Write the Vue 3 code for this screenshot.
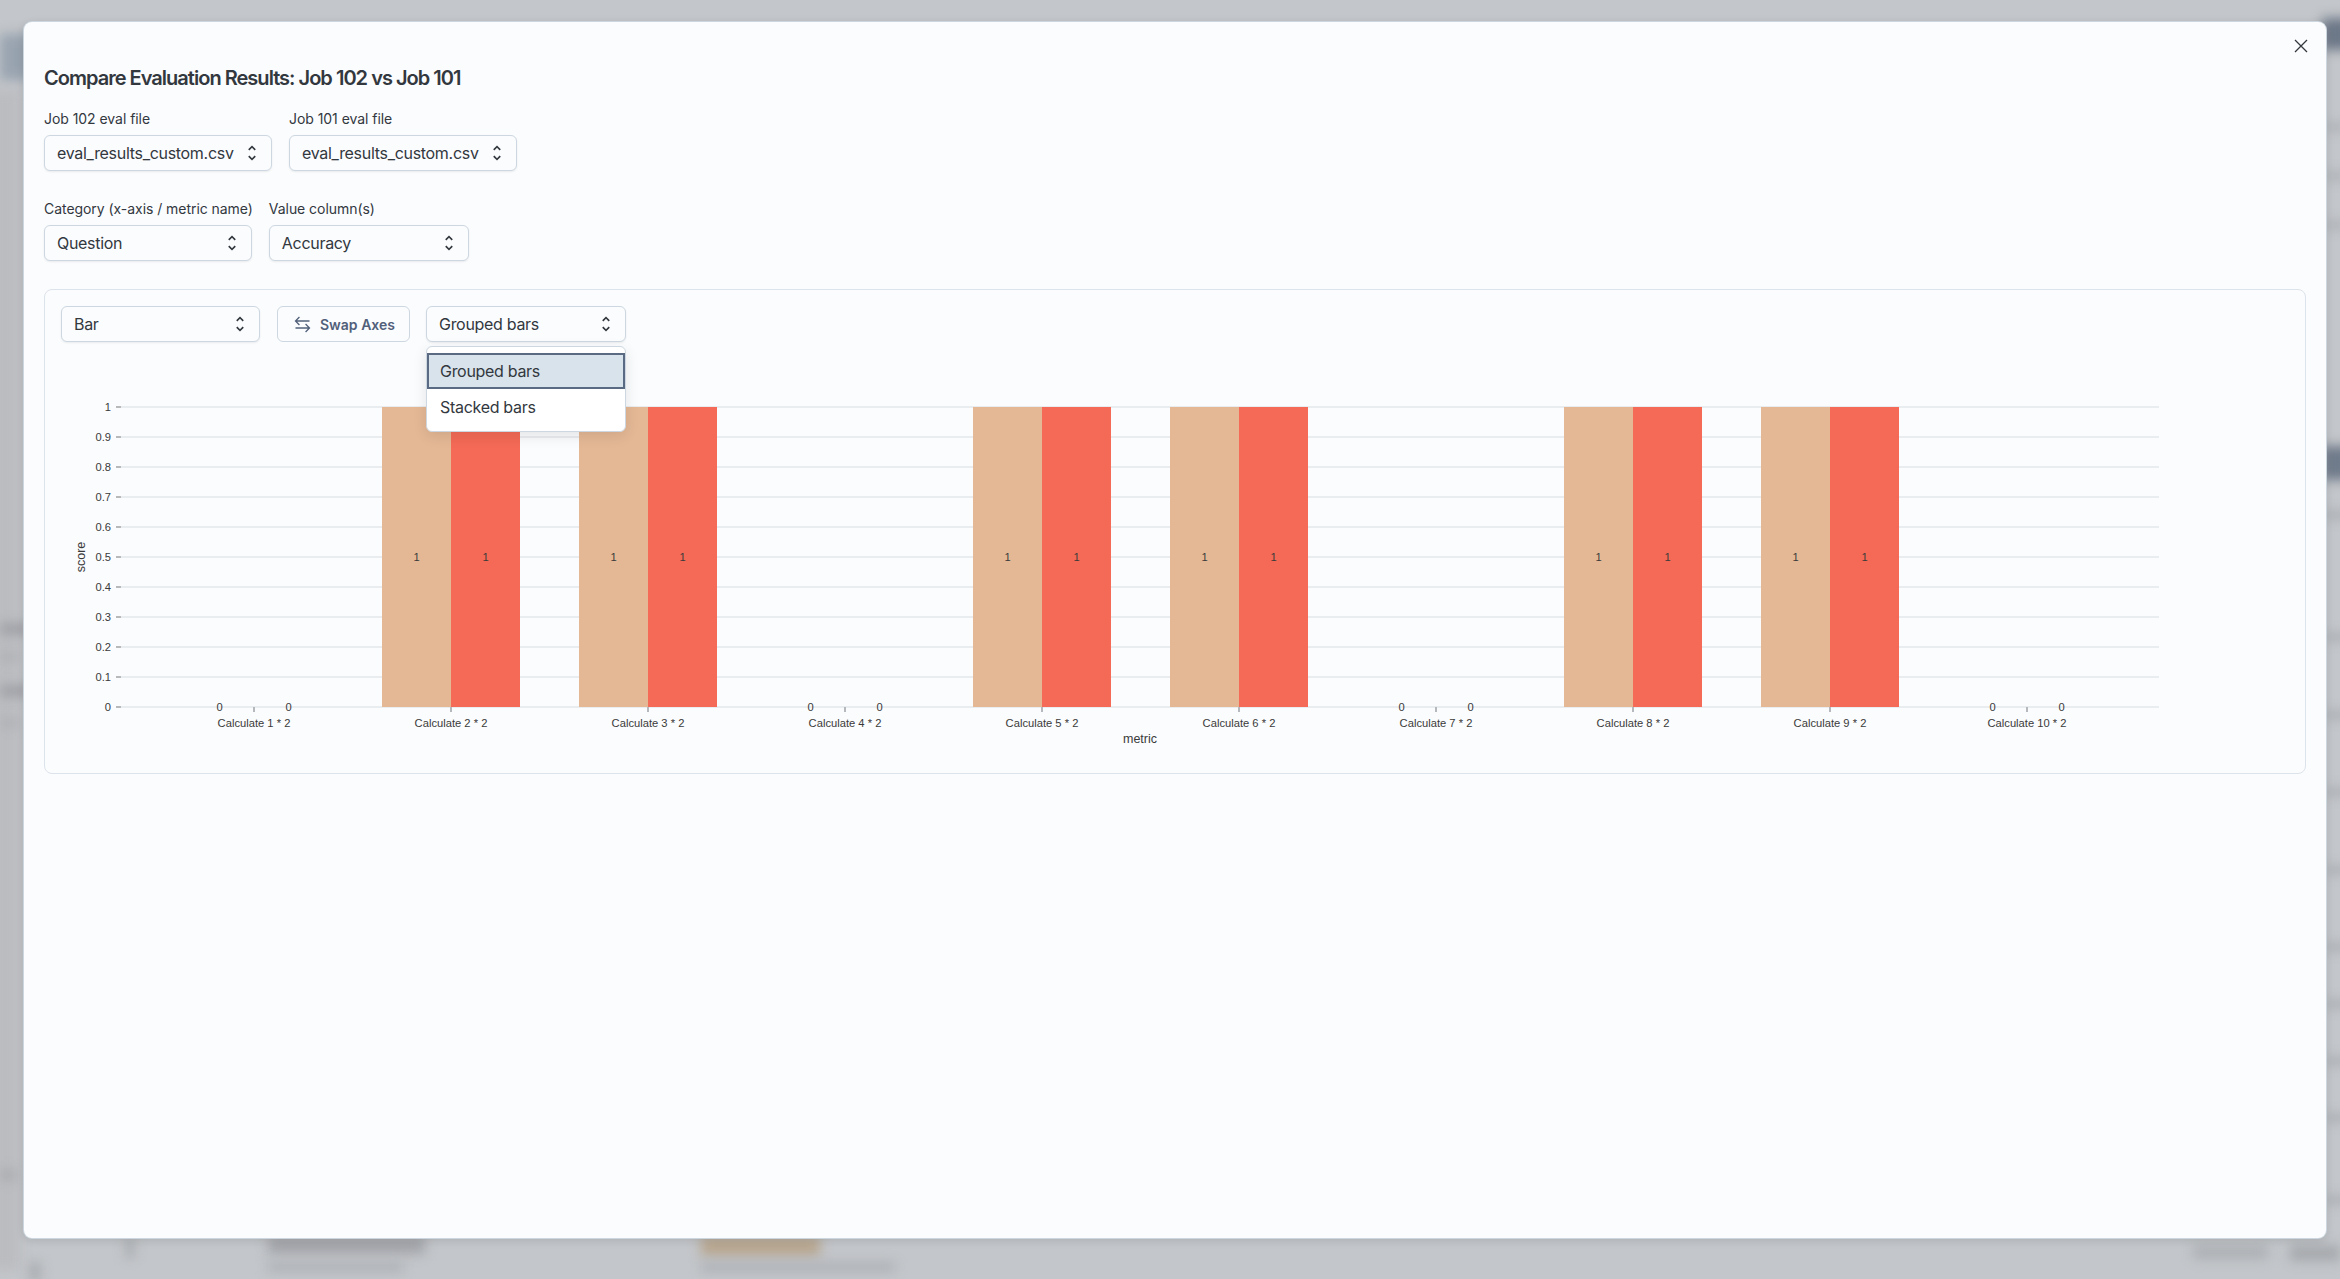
<script setup>
// blurred page behind the modal
const smudges = [
  { x: 0, y: 34, w: 46, h: 46, c: '#98a3b0' },
  { x: -10, y: 90, w: 30, h: 1180, c: '#bbbcc0' },
  { x: 0, y: 624, w: 30, h: 10, c: '#9a9ca1' },
  { x: 0, y: 654, w: 18, h: 6, c: '#a8aaae' },
  { x: 0, y: 686, w: 30, h: 10, c: '#9a9ca1' },
  { x: 0, y: 720, w: 18, h: 6, c: '#a8aaae' },
  { x: 0, y: 1170, w: 16, h: 10, c: '#a8aaae' },
  { x: 2322, y: 18, w: 30, h: 32, c: '#6c7787' },
  { x: 2326, y: 124, w: 20, h: 6, c: '#a4a7ac' },
  { x: 2326, y: 173, w: 20, h: 6, c: '#a4a7ac' },
  { x: 2326, y: 222, w: 20, h: 6, c: '#a4a7ac' },
  { x: 2322, y: 446, w: 30, h: 34, c: '#6f7a8a' },
  { x: 2326, y: 512, w: 20, h: 6, c: '#a0a3a8' },
  { x: 2326, y: 634, w: 20, h: 6, c: '#a0a3a8' },
  { x: 2326, y: 712, w: 20, h: 6, c: '#a0a3a8' },
  { x: 2326, y: 789, w: 20, h: 6, c: '#a0a3a8' },
  { x: 2326, y: 867, w: 20, h: 6, c: '#a0a3a8' },
  { x: 2326, y: 944, w: 20, h: 6, c: '#a0a3a8' },
  { x: 2326, y: 1001, w: 20, h: 6, c: '#a0a3a8' },
  { x: 2326, y: 1058, w: 20, h: 6, c: '#a0a3a8' },
  { x: 2326, y: 1115, w: 20, h: 6, c: '#a0a3a8' },
  { x: 2326, y: 1197, w: 20, h: 6, c: '#a0a3a8' },
  { x: 126, y: 1238, w: 8, h: 20, c: '#a6a9ad' },
  { x: 30, y: 1262, w: 10, h: 20, c: '#a6a9ad' },
  { x: 268, y: 1236, w: 157, h: 18, c: '#a2a4a9' },
  { x: 268, y: 1262, w: 135, h: 10, c: '#aeb1b6' },
  { x: 701, y: 1236, w: 119, h: 20, c: '#b8a68f' },
  { x: 701, y: 1262, w: 194, h: 10, c: '#aeb1b6' },
  { x: 2193, y: 1245, w: 75, h: 14, c: '#adb0b4' },
  { x: 2290, y: 1245, w: 50, h: 16, c: '#a6a9ad' }
]

const fileFields = [
  { label: 'Job 102 eval file', value: 'eval_results_custom.csv' },
  { label: 'Job 101 eval file', value: 'eval_results_custom.csv' }
]

const chevrons = 'M12 5.83 15.17 9l1.41-1.41L12 3 7.41 7.59 8.83 9 12 5.83zm0 12.34L8.83 15l-1.41 1.41L12 21l4.59-4.59L15.17 15 12 18.17z'

// chart, in svg coordinates (svg sits at 61,361 on the page)
const plot = { left: 60, right: 2098, top: 46, bottom: 346 }
const barWidth = 69
const yTicks = [0, 0.1, 0.2, 0.3, 0.4, 0.5, 0.6, 0.7, 0.8, 0.9, 1].map((v) => ({
  v,
  y: plot.bottom - v * (plot.bottom - plot.top)
}))
const scores = [0, 1, 1, 0, 1, 1, 0, 1, 1, 0]
const groups = scores.map((score, i) => ({
  name: `Calculate ${i + 1} * 2`,
  x: 193 + 197 * i,
  score
}))
</script>

<template>
  <div class="page">
    <div class="backdrop">
      <div
        v-for="(s, i) in smudges"
        :key="i"
        class="smudge"
        :style="{ left: s.x + 'px', top: s.y + 'px', width: s.w + 'px', height: s.h + 'px', background: s.c }"
      ></div>
    </div>

    <div class="modal">
      <button class="close" aria-label="Close">
        <svg viewBox="0 0 14 14" width="14" height="14">
          <path d="M1 1 13 13M13 1 1 13" fill="none" stroke="#32383e" stroke-width="1.3" />
        </svg>
      </button>

      <h2 class="title">Compare Evaluation Results: Job 102 vs Job 101</h2>

      <div class="field-row first">
        <div v-for="f in fileFields" :key="f.label" class="field">
          <label>{{ f.label }}</label>
          <div class="select file-select">
            <span>{{ f.value }}</span>
            <svg class="chev" viewBox="0 0 24 24"><path :d="chevrons" /></svg>
          </div>
        </div>
      </div>

      <div class="field-row second">
        <div class="field">
          <label>Category (x-axis / metric name)</label>
          <div class="select category-select">
            <span>Question</span>
            <svg class="chev" viewBox="0 0 24 24"><path :d="chevrons" /></svg>
          </div>
        </div>
        <div class="field">
          <label>Value column(s)</label>
          <div class="select value-select">
            <span>Accuracy</span>
            <svg class="chev" viewBox="0 0 24 24"><path :d="chevrons" /></svg>
          </div>
        </div>
      </div>

      <div class="card">
        <div class="controls">
          <div class="select">
            <span>Bar</span>
            <svg class="chev" viewBox="0 0 24 24"><path :d="chevrons" /></svg>
          </div>
          <button class="swap">
            <svg viewBox="0 0 24 24" width="21" height="21" fill="none" stroke="#51607a" stroke-width="1.5">
              <path d="M20 8H4M8.5 3.5 4 8l4.5 4.5M4 16h16M15.5 11.5 20 16l-4.5 4.5" />
            </svg>
            Swap Axes
          </button>
          <div class="select-wrap">
            <div class="select">
              <span>Grouped bars</span>
              <svg class="chev" viewBox="0 0 24 24"><path :d="chevrons" /></svg>
            </div>
            <ul class="menu">
              <li class="active">Grouped bars</li>
              <li>Stacked bars</li>
            </ul>
          </div>
        </div>

        <svg class="chart" width="2226" height="396" viewBox="0 0 2226 396">
          <g v-for="t in yTicks" :key="t.v">
            <line :x1="plot.left" :x2="plot.right" :y1="t.y" :y2="t.y" class="grid" />
            <line :x1="plot.left - 5" :x2="plot.left" :y1="t.y" :y2="t.y" class="ytick" />
            <text :x="plot.left - 10" :y="t.y" text-anchor="end" dominant-baseline="central">{{ t.v }}</text>
          </g>

          <g v-for="g in groups" :key="g.name">
            <template v-if="g.score">
              <rect :x="g.x - barWidth" :y="plot.top" :width="barWidth" :height="plot.bottom - plot.top" fill="#e4b895" />
              <rect :x="g.x" :y="plot.top" :width="barWidth" :height="plot.bottom - plot.top" fill="#f46a56" />
            </template>
            <line :x1="g.x" :x2="g.x" :y1="plot.bottom" :y2="plot.bottom + 5" class="xtick" />
            <text :x="g.x - barWidth / 2" :y="g.score ? 196 : plot.bottom" text-anchor="middle" dominant-baseline="central">{{ g.score }}</text>
            <text :x="g.x + barWidth / 2" :y="g.score ? 196 : plot.bottom" text-anchor="middle" dominant-baseline="central">{{ g.score }}</text>
            <text :x="g.x" y="362" text-anchor="middle" dominant-baseline="central">{{ g.name }}</text>
          </g>

          <text class="legend" x="1079" y="378" text-anchor="middle" dominant-baseline="central">metric</text>
          <text class="legend" transform="translate(20 196) rotate(-90)" text-anchor="middle" dominant-baseline="central">score</text>
        </svg>
      </div>
    </div>
  </div>
</template>

<style>
html, body { margin: 0; overflow: hidden; }
</style>

<style scoped>
.page {
  position: relative;
  width: 2340px;
  height: 1279px;
  box-sizing: border-box;
  padding: 22px 14px 41px 24px;
  display: flex;
  overflow: hidden;
  background: #c3c6ca;
  font-family: Inter, "Liberation Sans", sans-serif;
  color: #32383e;
}
.backdrop { position: absolute; inset: 0; overflow: hidden; }
.smudge { position: absolute; filter: blur(6px); }

.modal {
  position: relative;
  flex: 1;
  box-sizing: border-box;
  padding: 42px 20px;
  background: #fbfcfe;
  border-radius: 8px;
  box-shadow: 0 0 0 1px #cbd6df, 0 2px 10px rgba(21, 21, 21, 0.14);
}
.close {
  position: absolute;
  top: 17px;
  right: 18px;
  width: 14px;
  height: 14px;
  padding: 0;
  display: flex;
  border: 0;
  background: none;
}
.title {
  margin: 0 0 17px;
  font-size: 20px;
  line-height: 28px;
  font-weight: 600;
  letter-spacing: -0.98px;
}
.field-row { display: flex; gap: 16px; }
.field-row.first { gap: 17px; }
.field-row.second { margin-top: 28px; }
.field { display: flex; flex-direction: column; gap: 6px; }
label {
  font-size: 14px;
  line-height: 20px;
  font-weight: 400;
  letter-spacing: -0.05px;
  white-space: nowrap;
}

.select {
  width: 199px;
  height: 36px;
  box-sizing: border-box;
  padding: 0 9px 0 12px;
  display: flex;
  align-items: center;
  justify-content: space-between;
  background: #fbfcfe;
  border: 1px solid #cdd7e1;
  border-radius: 6px;
  box-shadow: 0 1px 2px rgba(21, 21, 21, 0.08);
  font-size: 16px;
  letter-spacing: -0.3px;
}
.file-select { width: 228px; }
.category-select { width: 208px; }
.value-select { width: 200px; }
.chev { width: 20px; height: 20px; fill: #32383e; flex: none; }

.card {
  margin-top: 28px;
  padding: 16px;
  height: 485px;
  box-sizing: border-box;
  border: 1px solid #dde3ea;
  border-radius: 8px;
}
.controls { display: flex; gap: 17px; height: 36px; }
.swap {
  width: 133px;
  height: 36px;
  padding: 0 0 0 14px;
  display: flex;
  align-items: center;
  gap: 7px;
  background: #fbfcfe;
  border: 1px solid #cdd7e1;
  border-radius: 6px;
  font: 600 14px Inter, "Liberation Sans", sans-serif;
  color: #51607a;
}
.select-wrap { position: relative; margin-left: -1px; }
.select-wrap > .select { width: 200px; }
.menu {
  position: absolute;
  z-index: 2;
  top: 40px;
  left: 0;
  width: 200px;
  box-sizing: border-box;
  margin: 0;
  padding: 6px 0;
  list-style: none;
  background: #fff;
  border: 1px solid #cdd7e1;
  border-radius: 6px;
  box-shadow: 0 4px 14px rgba(21, 21, 21, 0.1);
  font-size: 16px;
  letter-spacing: -0.3px;
}
.menu li {
  height: 36px;
  box-sizing: border-box;
  padding-left: 13px;
  display: flex;
  align-items: center;
}
.menu li.active {
  background: #d9e3eb;
  outline: 2px solid #5a6a82;
  outline-offset: -2px;
}

.chart { display: block; margin-top: 19px; }
.chart text {
  font-family: "Liberation Sans", Arial, sans-serif;
  font-size: 11.2px;
  fill: #3a3a3a;
}
.chart text.legend { font-size: 12.5px; }
.grid { stroke: #dadde1; stroke-width: 1.2; }
.ytick { stroke: #777; stroke-width: 1; }
.xtick { stroke: #b5b8bc; stroke-width: 2; }
</style>
